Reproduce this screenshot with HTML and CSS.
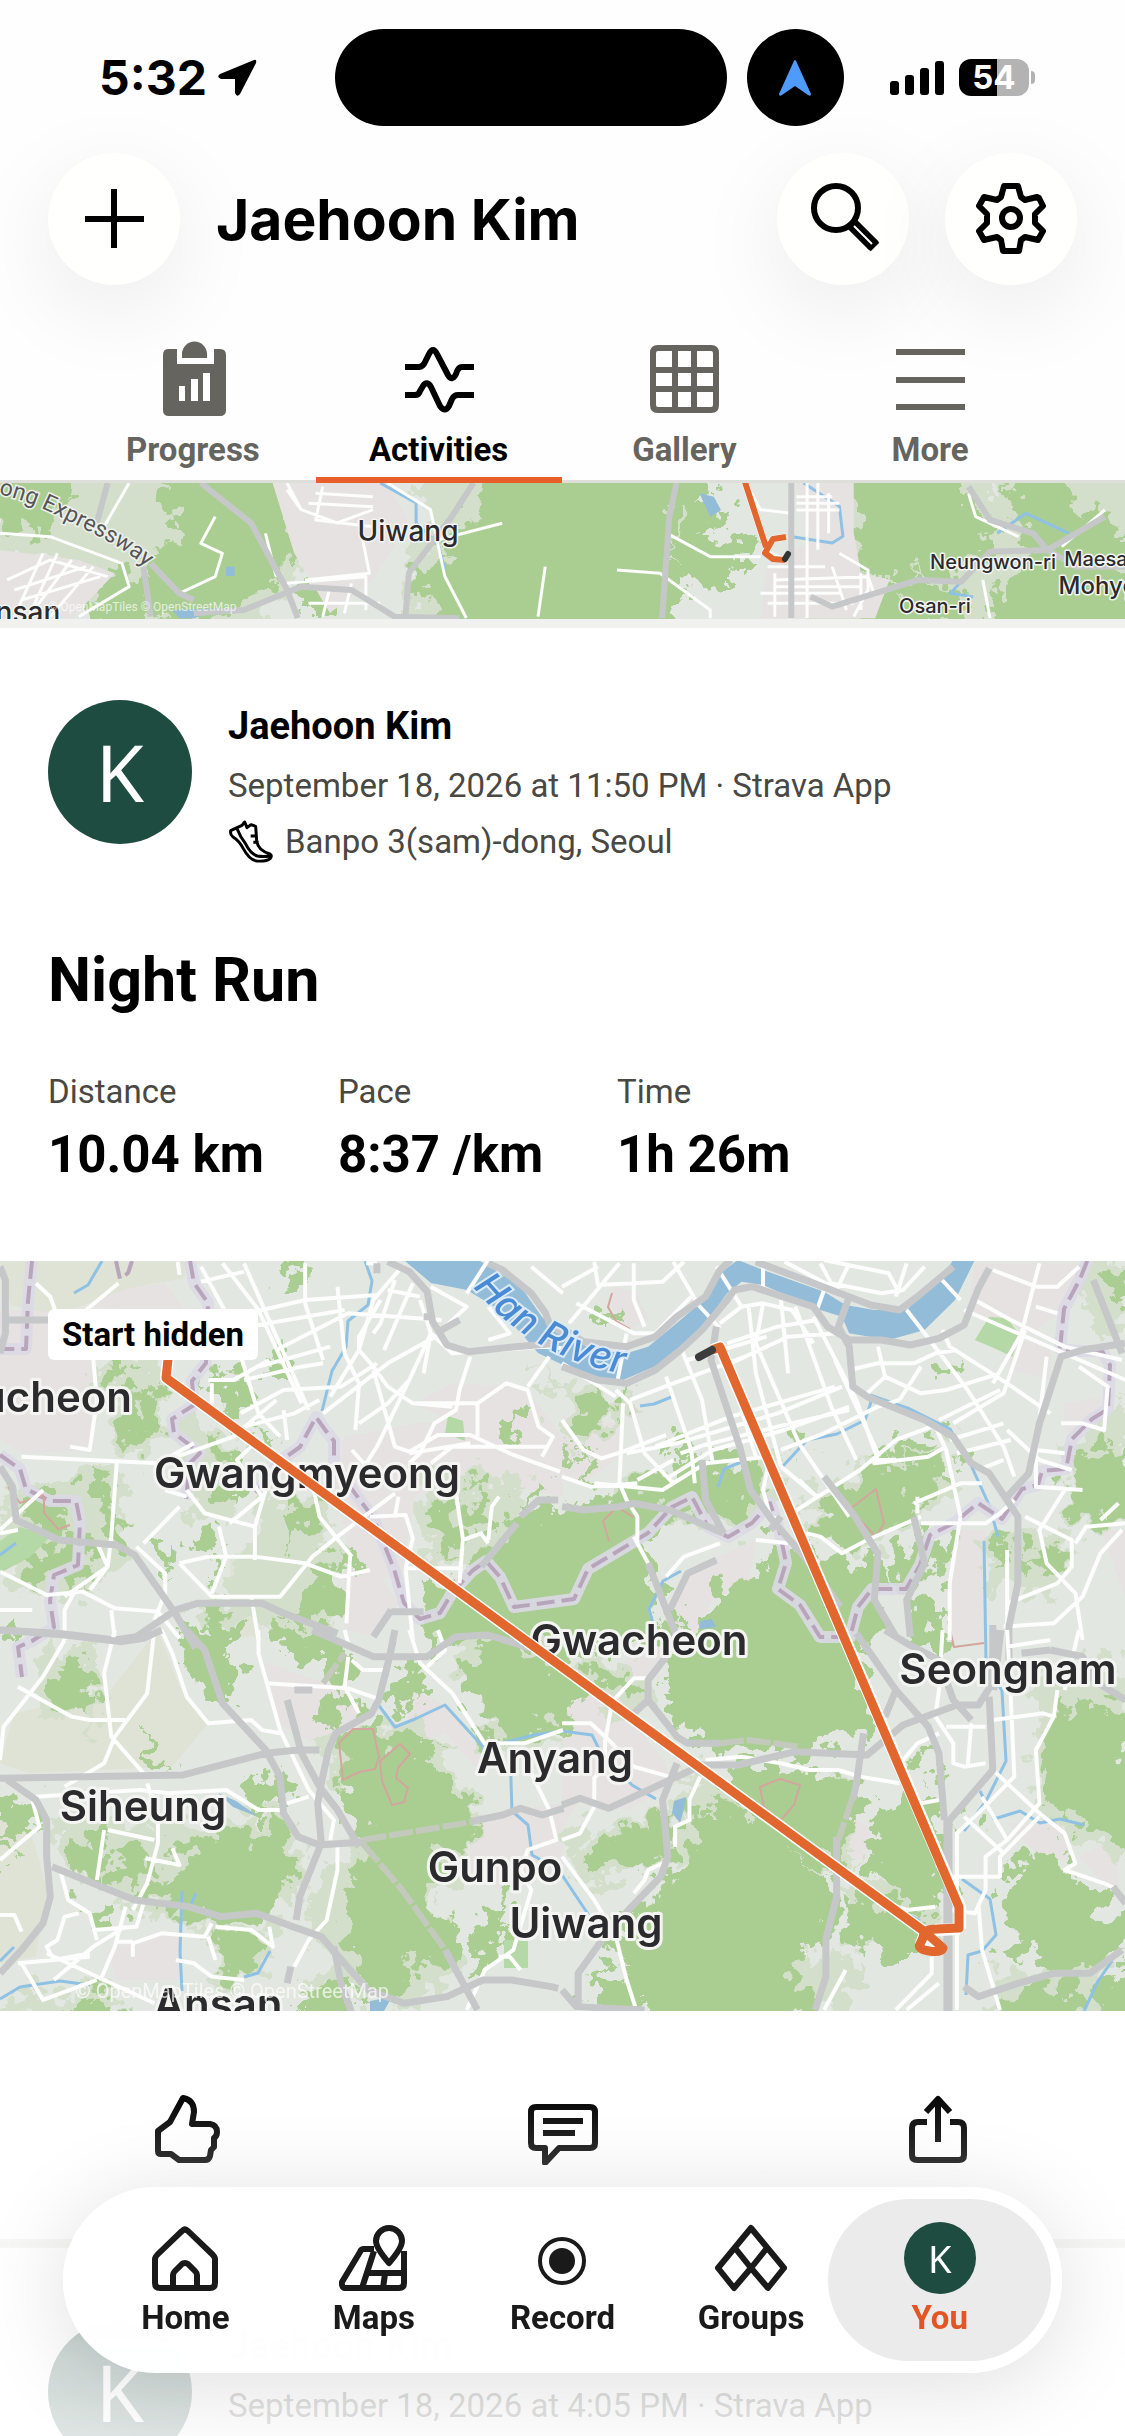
FILE: index.html
```html
<!DOCTYPE html>
<html lang="en">
<head>
  <meta charset="UTF-8">
  <meta name="viewport" content="width=device-width, initial-scale=1">
  <title>Activities</title>
  <link rel="stylesheet" href="styles.css">
</head>
<body>
  <div class="screen">
    <header class="header">
      <div class="status">
        <div class="status-time">
          <span>5:32</span>
          <svg width="40" height="40" viewBox="0 0 40 40"><path d="M37 2 3 16q-4 3 1 5h14v14q2 5 5 1L39 5q1-4-2-3z"/></svg>
        </div>
        <div class="status-island">
          <div class="island"></div>
          <div class="island-dot">
            <svg width="34" height="38" viewBox="0 0 34 38"><path d="M17 1q1 0 2 3l14 31q0 3-3 1L17 27 4 36q-3 2-3-1L15 4q1-3 2-3z" fill="#4f9bfb"/></svg>
          </div>
        </div>
        <div class="status-right">
          <svg width="54" height="34" viewBox="0 0 54 34"><rect y="20" width="9" height="14" rx="3"/><rect x="15" y="14" width="9" height="20" rx="3"/><rect x="30" y="7" width="9" height="27" rx="3"/><rect x="45" width="9" height="34" rx="3"/></svg>
          <div class="battery"><span>54</span></div>
        </div>
      </div>

      <div class="title-bar">
        <button class="round" aria-label="Add">
          <svg viewBox="0 0 132 132"><path class="line" d="M66 36v59M37 66h59"/></svg>
        </button>
        <h1>Jaehoon Kim</h1>
        <button class="round" aria-label="Search">
          <svg viewBox="0 0 132 132">
            <circle class="line" cx="59" cy="55" r="22"/>
            <path d="M74 70 97 93" stroke="#000" stroke-width="13"/>
            <path d="M95 91l3 3" stroke="#000" stroke-width="12" stroke-linejoin="round"/>
            <path d="M77 73 95 91" stroke="#fff" stroke-width="2"/>
          </svg>
        </button>
        <button class="round" aria-label="Settings">
          <svg viewBox="0 0 132 132">
            <circle class="line" cx="66" cy="65" r="9"/>
            <path class="line" d="M59 33h14l3 11 4 3 12-3 2 1 4 8-8 8v9l8 8-5 9-13-3-4 3-2 11H58l-2-11-4-3-13 3-5-9 8-8v-9l-8-8 5-9 13 3 4-3z"/>
          </svg>
        </button>
      </div>

      <nav class="tabs">
        <button class="tab">
          <svg viewBox="0 0 80 80"><path d="M15 9h9v15h37V9h6q6 0 6 6v55q0 6-6 6H16q-6 0-6-6V15q0-6 5-6z"/><path d="M29 18v-4a12 12 0 0 1 25 0v4z"/><path d="M26 46h6v15h-6zM38 39h7v22h-7zM50 33h7v28h-7z" fill="#fff"/></svg>
          Progress
        </button>
        <button class="tab active">
          <svg viewBox="0 0 80 80"><path class="line" d="M6 27h14q4 0 6-5l4-8q4-8 8 0l11 21q4 7 8-1 2-7 6-7h12M6 55h10q4 0 5-4l3-5q4-6 8 1l9 19q5 7 9 0l3-7q2-4 6-4h16"/></svg>
          Activities
        </button>
        <button class="tab">
          <svg viewBox="0 0 80 80"><path class="line" d="M14 8h53q5 0 5 5v52q0 5-5 5H14q-5 0-5-5V13q0-5 5-5zM31 8v62M50 8v62M9 30h63M9 49h63"/></svg>
          Gallery
        </button>
        <button class="tab">
          <svg viewBox="0 0 80 80"><path class="line" d="M6 12h69M6 40h69M6 67h69"/></svg>
          More
        </button>
      </nav>
    </header>

    <main class="feed">
      <section class="card">
        <svg class="map map-strip" viewBox="0 0 1125 136" preserveAspectRatio="xMidYMid slice">
          <defs>
            <filter id="rough" x="-5%" y="-5%" width="110%" height="110%">
              <feTurbulence type="fractalNoise" baseFrequency="0.045" numOctaves="4" seed="7" result="n"/>
              <feDisplacementMap in="SourceGraphic" in2="n" scale="62" xChannelSelector="R" yChannelSelector="G"/>
            </filter>
          </defs>
          <rect class="land" width="1125" height="136"/>
          <g filter="url(#rough)">
            <path class="wood-light" d="M0-20h330l-20 90-60 90H120L60 80 0 70zM430-20h250v180H400zM830-20h150l40 100-20 80h-200zM1000-20h180v180H940z"/>
            <path class="wood" d="M-20-30h110l-20 50-30 30-60-20zM150-30h130v60l20 40-30 30-60 40-80-10 20-60 30-20zM300 90h60l-20 40h-40zM318 30l30 5 0 40-30-5zM500-30h170v100l20 30-20 60H450l-40-60 50-50zM680 10l50 10-20 20 50 30-30 20v20l-60-20zM600-20h110v30l-50 20zM850-30h90l30 50 30 30-60 50-80-10-10-60zM1000-10h60l20 40 50 10v80l-80 30-40-40 20-50zM860 95l100 10 10 40H850zM990 110l140-20v60h-140zM100 80l60 30-20 40h-50zM560 100l100-10 10 60H540z"/>
          </g>
          <g transform="translate(0 -163) scale(.7174 .3333)">
            <path class="urban" d="M380 489h160l30 120-50 170-60 100-50-180zM1110 489h80v150l10 120 40 20-20 116h-160l10-170 60-60zM0 690l110 30 50 40-60 135H0z"/>
            <path class="stream" d="M530 489l50 60 0 60 30 60 10 80M1120 489l50 70 5 90-15 20-60-20M1390 640l40-60 60 60M1350 760l-25 60 30 10-20 30"/>
            <path class="water" d="M975 520l20 10 10 40-15 20zM315 740h12v28h-12zM240 870l70-5-40 30h-20z"/>
            <path class="road" d="M180 489l-40 150M400 489l20 80 50 40 50-40M420 570l-20-60M450 500l-10 100 80 20M440 520l80 10M430 550l90 10M540 489l60 80 20 200 30 125M370 640l15 130M300 590l-20 80 30 30-10 70-50 50M0 640l70 10 100 80 10 70-70 90M10 780l60-60 80 50M30 840l110-70M20 810l100-70M60 700l-40 190M80 700l-40 190M100 720l-60 170M130 740l-60 150M400 790l110-20 0 100M430 850l100 0M460 800l-10 90M490 790l-10 90M700 610l-90 50M760 740l-10 150M500 600l15 160-90 20M930 640l60 70 70 0M860 750l60 10 70 110 0 25M1125 489v405M1110 570h60M1110 530h50M1110 550h60M1140 489v200M1155 520v120M1070 740h80M1080 780l130-10 10 60M1080 800h120M1060 820h110M1070 850h120M1160 740l20 130M1200 760l0 110M1080 760v130M1350 520l10 70 60 60M1370 780l10 115M1480 680l60-110M1170 700l40 50 0 60-20 80M1040 489l20 80 40 10"/>
            <path class="highway" d="M150 489l-15 120M210 730l40 90 20 20M660 489l-30 100-60 170-5 135M943 489l-10 100-10 305M270 880l70-10 80-70 70 10 60 80 90 5M1130 830l30 30 60-40 60-40 60 5 40-90 80-5 80-100M1350 500l30 100 60 40 20 50M1460 690l40 50 68 0M280 489l70 120 50 200 15 85M200 740l10 150"/>
            <path class="highway wide" d="M1103 489v405"/>
          </g>
          <path id="expressway" d="M-78 12C-20 0 20 14 60 34S130 66 168 104" fill="none"/>
          <text class="road-name"><textPath href="#expressway">Yeongdong Expressway</textPath></text>
          <g class="place small">
            <text x="408" y="58" font-size="28">Uiwang</text>
            <text x="993" y="86" font-size="20">Neungwon-ri</text>
            <text x="1102" y="83" font-size="20">Maesan</text>
            <text x="1112" y="111" font-size="24">Mohyeon</text>
            <text x="935" y="130" font-size="20">Osan-ri</text>
            <text x="18" y="139" font-size="28">Ansan</text>
          </g>
          <path class="route-case" d="M744-4l22 68M786 54l-13 2-8 14 18 7"/>
          <path class="route thin" d="M744-4l22 68M786 54l-13 2-8 14 8 6 12 1"/>
          <path d="M785 76l3-5" stroke="#333" stroke-width="6" stroke-linecap="round"/>
          <text class="credit" x="48" y="128" font-size="12">© OpenMapTiles © OpenStreetMap</text>
        </svg>
      </section>

      <article class="card">
        <div class="card-head">
          <div class="avatar">K</div>
          <div>
            <div class="name">Jaehoon Kim</div>
            <div class="meta">September 18, 2026 at 11:50 PM · Strava App</div>
            <div class="place-line">
              <svg width="46" height="44" viewBox="24 30 138 132"><path d="M32 62 66 46l8-10 7 17 12-9 14 5 3 43q4 30 40 40 8 5 0 14-10 9-40 7-22-3-40-37-12-24-32-36-8-6-6-18zM52 58q8 22 24 42 16 32 36 38 18 3 38 0M92 78h17M100 97h16"/></svg>
              Banpo 3(sam)-dong, Seoul
            </div>
          </div>
        </div>
        <h2>Night Run</h2>
        <dl class="stats">
          <div><dt>Distance</dt><dd>10.04 km</dd></div>
          <div><dt>Pace</dt><dd>8:37 /km</dd></div>
          <div><dt>Time</dt><dd>1h 26m</dd></div>
        </dl>

        <div class="map-wrap">
          <svg class="map" viewBox="0 0 1125 750">
            <rect class="land" width="1125" height="750"/>

            <!-- built-up areas and fields -->
            <g transform="translate(0 -11) scale(.359 .3333)">
              <path class="urban" d="M0 180h130l130 150 0 270-200 10-60-40zM260 130l200-30 60 90-260-20zM960 560l200-40 280-20 128 60v180l-280-60-130 60-40 250-130-20-60-280zM960 960l90 0 60 100-60 100-90-20zM1150 460l110-60 200 10 108 150-250-10z"/>
              <path class="field" d="M0 35h530l-20 50-150 30-200 80-130-30zM640 920l90 0 0 240-90 0z"/>
            </g>
            <g transform="translate(562 -11) scale(.359 .3333)">
              <path class="urban" d="M0 500l160 20v100l-100 80-60-20zM1150 40l320 0-60 130-100 80-180-70zM350 960l190-90-20 120-100 60-60 120h-70zM1090 840h90v330h-110zM1500 840h68v200zM1400 460l100-20 0 80-100 30z"/>
              <path class="urban" d="M140 110l70 20 30 80-50 30-50-70zM1240 260l120 30 0 100-110-30z"/>
            </g>
            <g transform="translate(0 369) scale(.359 .3333)">
              <path class="field" d="M0 560l90 60 40 160-30 200L0 1000zM40 250l260-60 140-190 60 170 80 110-100 130-400 20-80-30z"/>
              <path class="urban" d="M720 90l240 90 50 100-100 80-140-80zM1150 180l100 50 90 140 0 60-100-120-120 50zM1310 560l258-40v200l-180 60-80-60zM300 960l200-60 0 150-180 0z"/>
            </g>
            <g transform="translate(562 369) scale(.359 .3333)">
              <path class="urban" d="M0 180l60-60 180 0-40 160 60 80 60 100-140 80-130-30L0 600zM150 120l80-80 60 30-90 180zM800 560l60 30-20 100-40-10zM1240 580l150 0 40 110-90 0zM1440 680l110-70v200z"/>
            </g>

            <!-- woodland, edges roughened by the filter -->
            <g filter="url(#rough)">
              <g transform="translate(0 -11) scale(.359 .3333)">
                <path class="wood-light" d="M240 320h200l20 180-60 130-70-30-10-150zM0 730l320-80 50 200-100 180-180 20-90-100zM480 500l180 60-10 260-120-40zM740 720l140 20 60 120-10 300-120-20-330-40 150-60 60-160zM1160 680l320 0-70 250-240 20zM1480 300l88 140v60z"/>
                <path class="wood" d="M775 45h80l-10 40-70 10zM300 345h40l-10 70-30-10zM365 415h80l-10 80-45 110-40-30zM580 370l110-15 20 70-50 60-50 20-30-90zM740 310h80l0 70-70 0zM740 520l20 70-30-10zM600 560l60 40 0 180-40-40zM265 670l40 10 0 80 60 60-10 60-50-20-40-80zM60 750l120-40 20 160-130-30zM60 910l150-40 70 40-10 100-80 0-50-50-70 60zM800 760l50-20 20 130-80 30zM850 830h50v50h-50zM420 870l50 0 20 90-50-30zM520 850l90-10-10 90-80-30zM920 890l60 0 10 80-70-20zM850 970l100-10 10 60-40 90-90-10zM1205 760l60-20 10 180-70-10zM1300 700l60 10-10 130-50-10zM1390 520l50-10v50l-50 10zM1450 730l70-30-20 50zM1390 830l200-70v440h-400l10-190 100-50zM560 960l50 0 0 60zM570 1090l60-30 30 140h-80zM760 1090l80 40 50 60h-110z"/>
              </g>
              <g transform="translate(562 -11) scale(.359 .3333)">
                <path class="wood-light" d="M0 420l120-30 80 80-140 130-60-60zM160 680l200-40 240-10-20 180-100 20-340-40zM640 780l240-180 220-30-10 180-200 140-180-20zM1180 850l240 0-40 200-200-60zM1440 60l128-30v200l-90 40zM1400 620l168-200v420l-150-20z"/>
                <path class="wood" d="M0 790l140-70 190-90 220-10 40 90-100 90-120 0-70-20-40 70-40 30 80 160-20 160H0zM20 480l80-60 80 20-40 60-70 60zM30 590l50 40-10 70-30-60zM300 530h50l-10 100-30-10zM635 545l60 0-20 50-45 10zM680 790l210-160 200-30 10 80-110 60 10 60-140 60-80 30-80-40zM580 860l120 20 110 320H330l110-190 110-40zM710 930l160-20 20 100-20 190h-60zM910 940l180-100 0 70-120 110-70-10zM1205 870l40-10-10 90-40 0zM1290 890l100 0 10 60-120 20zM1440 630l150-90v290l-140-20-40-90zM1050 350l60-20-20 50-50 10zM90 170l70 40-70 0zM1490 90l90-30v70l-70 0zM960 1070l110-20-10 150h-80zM880 600l160-50-10 40-100 30z"/>
              </g>
              <g transform="translate(0 369) scale(.359 .3333)">
                <path class="wood-light" d="M100 60l170 0 0 240-170-60zM880 340l300-90 80 150 80 100-20 200-100 100 60 240-140 100-240-80-40-240 140-220zM160 560l680 0 0 260-240 60-250-60-180-100zM560 880l200 0 20 120-160 80zM1240 40l330-20v320l-200 20zM0 1100l340-40v100H0z"/>
                <path class="wood" d="M20 20h30v40h-30zM145 100l90-20 30 100-50 110-70-80zM505 0l100 10 50 100 0 110-50-10-90-120zM765 0l150 0 80 90-80 110-40-90zM895 200l90 0-10 80-60 20zM1085 110l90 0 0 100-70 30zM1295 90l120-70 180 90v180l-100 20-110 20-110-160zM415 320l60 60-10 50-50-60zM0 510l100 10 20 70-120 30zM0 640l80 10-80 50zM705 420l70-10 20 120-50 30-60-60zM955 340l70-60 90 50 100 0-20 80 60 30 70 70-10 140-100 50-20 100 90 110-50 100-90-30-30 190-80-100-70-150-30-70 90-190-80-180zM195 630l100-20 0 150-90-20zM495 630l160-40 140 20 40 60-70 170-150 30-200-60 20-60 80-40zM325 650l100 0-30 120-100-10zM275 840l60-10-10 60-50 0zM595 910l110 0 40 60-80 80-60-40zM195 1100l140 0v80H145zM845 1060l130 10v100H835zM1325 880l100-90-20 200-90 30z"/>
              </g>
              <g transform="translate(562 369) scale(.359 .3333)">
                <path class="wood-light" d="M60 60l200 80-30 140-170-100zM340 420l480 20-20 280-200 60-260-140zM0 620l330-90 30 160-200 80-110-20zM1300 120l268-20v600l-250-140zM820 700l240 160-40 120-220-40zM1200 1040l300-60v200h-300zM580 960l260 30-60 160h-200z"/>
                <path class="wood" d="M295-20l360 30 160 60 60 240-210 60-230-20-110-50-30-80zM75 100l120 40 10 50-110-20zM415 420l200-10 200 40 10 80-40 120-10 70-210-100zM75 630l150-50 80-30-10 150-80 40-150-30zM355 550l160 20 260 180-20 160-120 80 80 190H255L115 910l180-160 60-60zM415 500l180 120-160-40zM875 550l80-60 70 40 40 160 0 150-100 0-110-160zM795 790l120 40 120 80-40 80-80 0-120-80zM1345 300l80-90 170 40v400l-160-80-90-40zM1235 710l130-60 60 110 170 130v80l-190 50-180-50 20-110zM1450 1180l50-110 90-80v200zM1235 1090l180-30 20 120h-200zM95 1010l120 50-10 120h-90zM965 390l60-50 20 110zM1100 560l40 0 0 50zM0 1090l40 0 0 60z"/>
              </g>
            </g>
            <g transform="translate(562 -11) scale(.359 .3333)">
              <path class="park" d="M1150 270l40-70 50 5 35 50-20 65-60-30z"/>
            </g>
            <path class="park" d="M448 155l15 5 2 20-20-8zM504 679h24v28h-24zM0 280l20-14 30 10-20 20-30 16z"/>

            <!-- water -->
            <g transform="translate(562 -11) scale(.359 .3333)">
              <path class="water" d="M0 255 90 300 180 310 240 290 330 210 395 150 440 70 490 30 560 60 730 125 790 165 870 180 960 180 1070 60 1090 30h60L1095 150 1010 240 910 270 800 250 780 200 720 180 560 105 500 95 460 130 400 220 300 330 170 390 110 390 50 375 0 345z"/>
            </g>
            <path class="water" d="M405 0h75l15 9 26 17 21 30 21 18v30l-25-12-17-20-26-26-28-17-36-7z"/>
            <path class="water" d="M218 532l18 8 20 14-3 0-20-8zM674 540l12-4-2 12-4 14-8-10zM370 740l22-4-8 14h-14zM700 360l12-2 4 8-16 2z"/>
            <path class="stream" d="M365 0l7 20-4 24-20 16-2 26-14 24-10 40M102 0l-14 24-14 8M0 294l16-12M640 145l14-2 20-8M718 226l6-18 20-8M783 205l24-26 30-6 28-14 6-18-6-10M870 134l40 14 40 20 20 34 20 44 8 30M984 280l2 120 16 30 4 70-20 40-22 30M655 370l-6-22 14-28 18-10M395 380l-8 34-10 28 18 24 20-8 30-14 40 44M482 490l12-6 40-10 28-4 30 4 10 20 30 30 24 14M510 490l2 60 16 14 4 30 26 14 20 30 12 18M182 630l-2 60 2 40M270 690l-12 22-14 4M0 738l20-12 40-6 30 4M0 700l14-14M196 632l-6 14M980 530l14 28 26-8 20 12 20-4 24 6M962 618l28 20 6 36-14 16-14 4-2 40M1112 700l-14 20-14 30M896 646l24 14"/>

            <!-- borders of cities -->
            <path class="border-glow" d="M32 0l-4 40-2 48-26 0M0 194l20 14 6 20 24 12 26 0 4 20-2 44-24 10-4 26 4 26-22 14-14 6 4 30M190 0l4 22 14 20-2 60-14 18 2 24-22 14 2 14 26 20-10 10-4 36M256 232l24-32 20-14 16-30 10 14 8 10 0 24 40 54 20 50 10 34 16 16 20-6 12-20 20-22 14-10 14 16 14 30 60-8 14-30 60-36 24-26 20-10 16 30 20 10 24-14 18-20 10 30 6 30-8 26 22 16 20 32 30 0 8-30 14-18 34 0 14-24 10-30 24-12 24-20 24 16 20-30 16-4 4-14 24-2 6-30 20-20 16-10 2-44-8-14-22 0-20-2 4-40 16-30 20-50 14-22"/>
            <path class="border" d="M32 0l-4 40-2 48-26 0M0 194l20 14 6 20 24 12 26 0 4 20-2 44-24 10-4 26 4 26-22 14-14 6 4 30M190 0l4 22 14 20-2 60-14 18 2 24-22 14 2 14 26 20-10 10-4 36M256 232l24-32 20-14 16-30 10 14 8 10 0 24 40 54 20 50 10 34 16 16 20-6 12-20 20-22 14-10 14 16 14 30 60-8 14-30 60-36 24-26 20-10 16 30 20 10 24-14 18-20 10 30 6 30-8 26 22 16 20 32 30 0 8-30 14-18 34 0 14-24 10-30 24-12 24-20 24 16 20-30 16-4 4-14 24-2 6-30 20-20 16-10 2-44-8-14-22 0-20-2 4-40 16-30 20-50 14-22M116 0l4 18 8-6 4-12"/>
            <path class="zone" d="M339 482l14-14h20l6 28-4 12-16 3-16 8zM380 500l20-17 10 10-12 14-2 10 12 10-4 14-12 3-10-24zM760 526l20-8 20 6-6 20-14 16-16-14zM609 280l-6-20 14-14 16 10M850 248l26-20 8 34-8 14zM630 68l-14-8-8-14 4-14M8 226l12 16 24-8 M44 236l0 16 14 16 12-4M948 360l6 26 30-4"/>

            <!-- streets -->
            <g transform="translate(0 -11) scale(.359 .3333)">
              <path class="road" d="M0 840l120-120M60 620l380 20 100-60M0 965l130 70 100-10 90 50 120 10 60 80M440 640l210-80 120-110M260 330l10 120-20 150-55-10M325 640l-15 220-10 90-120 90M100 100l40 40 20 60M240 180l90-80M500 75l-5-40M560 50l80 160 80 280 60 70M620 40l100 140 120 280M680 40l180 440M560 95l120-30M650 200l200-50 200-15M640 240l320-60M770 300l200-110 260 20M720 350l200-60M680 390l160-40 60-10M580 390l70 0 100-60M590 400l0 60M670 490l120-70 160-10 100-70M680 530l140-40 70-40M790 480l10 90M850 40l0 120 50 170M900 490l180-150 150-90M920 440l80-140 40-150 80-100M940 110l20 200 40 90-10 140M1060 150l-60 110 0 40 40 50 40 60 70 50 110 10M1100 90l-40 130-20 30M1150 100l-80 200M1170 150l30 100-60 140-90 200-30 50M1000 520l80-60 60-70M1200 250l60 60 250-20 58 5M1310 320l-30 100-10 60-60 40-40 90-30 30M1160 460l170 0 80-60 60 20 30 110 40 30-30 60M1470 410l60-90M1040 360l60 230 40 15 80-50 90 0 120 60 130 50M1140 610l170-30M1200 640l60-50 260 0M1260 660l30 210 50-20 20 30M1330 460l0 100M1390 740l-20 30-10 100M980 600l50 60M520 720l50 70 140 40 0 100M740 720l-30 110M640 820l90-80-70-110 40-40M870 700l20 100 90 120M610 830l20 90-40 110M400 880l100-110M500 940l80-20 130 0 140 20 100 40 80-20M500 940l90 100 190 0 90-120 70-60 160-130M700 1040l20 130M975 920l-10 200M1030 800l100-5 20 70-20 90 150 0M1110 740l-10 60M1290 860l-10 140M1130 960l20 210M380 890l80 80 0 60-30 80M300 950l-50 70M270 880l30 70M180 1170l0-90 30-60M310 1080l10 90M0 1080l90 0M0 850l50-10M1050 40l-30 0M1200 110l100 60-60 60M1360 170l60 80-60 20M1480 50l88 80M1300 130l60-100M1200 250l-20 120M1080 120l90 20M520 740l-60-20"/>
              <path class="highway" d="M0 50l15 40 0 160-15 60M20 210l115 0M0 650l35 60 10 100 120 60 160 15 50 30 110 170 60 110M0 1140l160 10 160 20 60-10 110-80 60-20 180 0 60 30 150 60M1080 35l60 30 50 60 15 90 40 70 60 20 130-15 120-10M1450 800l50-50 55 0M1440 820l-100 130M1050 40l0 30M1180 200h30M1230 240l50-30M1090 1085l90 0M1040 1160l50-80"/>
              <path class="highway" d="M1360 40l40 20 80 70 40 60 10 30 38 30"/>
            </g>
            <g transform="translate(562 -11) scale(.359 .3333)">
              <path class="road" d="M0 110l100-60M20 220l140-180M40 160l160 90 60 0 100-110M200 40l0 110 30 80M90 35l10 70 180-10 60-60M180 250l-25 140M310 35l70 130 60 70M430 50l70 120M560 50l0 60M730 120l-20 60M940 130l-30-60-180-40M720 40l30 60 140 30 60-10 60-70M620 35l140 80M800 40l-40 90M960 40l-30 100M960 180l50 70M1050 80l60 70M290 380l70 220 10 100M330 290l60 160 30 190M520 170l20 200 70 280M560 160l-20 120 120 300 140 220M610 150l20 220M650 170l100 300 70 160M700 200l120 250 60 180 50 0M760 330l120 280M440 220l60-50 60-10 80 20 60 100M460 280l140-50 110-20M470 340l160-80 140-10M190 450l120-50 200-80M350 330l220-70M260 590l210-90 290-90M180 610l140-30 280-90 180-80M300 680l120-80 200-60 180-70M380 590l220-60 200-50M330 610l80-30M610 600l120-50 150-80 60-20M580 620l-20 100 20 80 30 10M500 480l40 140M610 650l100 90M640 790l190-130 100-90 100-40M880 610l-10 30 150-20 50-30M0 510l60 90 50 25 60-20 120-50M0 680l80 30 130-10M90 700l190 20 120-80 180-20M170 460l-10 240 20 50 30 50 0 80M150 420l40 40 40 150 80 90M0 340l150 100M210 690l100-60M240 940l-40-80M800 360l80-20 100 0 60-30 60-10M880 290l20 90-50 50M900 380l100 50 70-10 150-50M940 450l60-100M1010 250l120 170 100 170 30 90M1060 240l20 50 160 110 120 90M1120 180l450 210M1150 150l100 60 150 80 160 40M1200 400l80-150 40-170 10-40M1290 240l-60 190-140 90M1050 510l170-90M1080 570l150-50M1100 610l150-40M1160 660l70-30M1240 540l90 90 90 30M1200 60l120 50 60 0 60-60M1320 170l60 20M1440 350l80 60-10 130-60-20-60 0M1350 320l-30 280 80 10M1320 600l0 110 130 10M1400 720l-70 120 20 100 80 90 20 140M1290 800l130 70 0 80-40 50-140 60M1230 1130l140-10 80-80 50-130 60-70M1430 880l30-50 110-10M1500 810l50-50M1260 750l-40 40-40 30-180 0M1000 800l-150 70-70 40-60-50-40-10M980 760l130-60 60 0M990 740l0 50M1040 530l30 70 40 200M1110 800l-30 200 0 170M660 690l50 50M290 980l50-60 100-40M540 870l90 10M1240 900l0 270"/>
              <path class="highway" d="M0 235l60 40 120 15 80-30 60-60 80-60 40-80 30-30M540 35l150 60 170 70 80 15 50-40 100-90M0 350l100 40 80 10 80-40 70-60 60-60 70-90 20-30 50-10 170 60 40 60 60 40 90 0 80 15 80-20 70-40 40-110 30-60M800 140l-30 90 30 60 10 120 40 30 160 70 80 50 50 80 50 30 80 130 0 80 0 120-25 130 0 100M1240 740l60-70 30-150 60-200 60-20 118-20M1480 90l80 220M430 230l-15 100 80 260 30 130 60 90 90 110 100 150M390 630l10 120 50 100M0 770l60 10 100-10 40-10 100 20 150 70M240 940l80 220M300 1080l50-110 80-40M730 680l80 110 70 120-10 140 60 110M980 800l30 140-50 110 10 110M610 800l-30 40"/>
            </g>
            <g transform="translate(0 369) scale(.359 .3333)">
              <path class="road" d="M180 30l-60 110-110 150-10 100M50 170l150 90 50 10 100 0M320 0l-30 130 20 190 90 110M430 0l-20 190-90 130-30 80-110 70M450 0l30 70 40 130 60 80 120-10 30 30 50 10M720 0l0 70 60 230 80 180M740 160l230 15 80 30M960 170l40 80M970 80l-10 90M980 90l30 30 60 0M960 0l10 40M1140 0l30 100 90 90 90 150 110 0 108-40M1220 0l20 60-50 50M100 500l140-10 150-10 80 10 160-10 90 60 60 0M410 460l30 100 0 80-30 120-40 80M300 600l130 30M290 600l-20 150M405 685l95 20-20-50M0 690l110-100-20-80M170 730l20 80 60 40 20 80M800 520l60-20M860 480l70 90-10 60M940 640l0 80-30 150-50 60-40 80M590 880l-20 40-120-10-80 30 0 40M580 920l20 70M600 890l100 10 60 50-10-60M350 830l-30 120-40 100M400 820l-20 70-120 10M220 850l-40 10-20 70-30 20 20 40 100-20M50 1000l200-20M130 970l300 150M60 1000l60 110 150-60M150 1050l110-100 90-60M320 935l50 0M490 990l50 10 50 40 90 10M0 855l40 0 20 50M1480 430l50 110 20 90-80 30-20 60 30 60-50 180-80 60-50 120M1390 980l30 0 30 40"/>
              <path class="highway" d="M0 0l180 15 160 20 60-10 50-25M520 0l50 60 50 160 120 140 40 80 10 110 40 70 60 25 130-10M0 445l510-10 230-65 90-10 60 0M20 450l80 60 30 60 0 110 10 120-20 80-60 80-60 70M145 710l230 100 150 20 90 30 100-10 100 40 80 30 40 50 90 110 100 40 120-20 100-50 80 0 110 20 20 5M800 210l40 160 50 100 50 70 60 110M1100 0l-15 80-30 130-20 40-100 60-20 50-20 100-10 60 10 120-60 160-10 70M870 0l170 80 150 0 80-60 90-5 120 40M1240 960l30 60 60 120M1310 575l90-20 50-20 60 20 60-20M820 180h50M930 950l20 110 30 90M810 1010l-10 50"/>
              <path class="tunnel" d="M1010 640l110 140 60 90 60 90M1010 630l310-55M900 160l60-90"/>
            </g>
            <g transform="translate(562 369) scale(.359 .3333)">
              <path class="road" d="M240 145l-40 0-60 70-20 120 0 70-30 40M0 280l80 0 50 50 70 80 100 30M90 440l0 90-40 80-50 20M0 680l90 130 60 110 30 130 30 100M385 440l-30 70 0 60-40 20 0 60M280 700l-40 20-10 30-30 40M400 390l100-10 110 20 80 20 80 0 60 20 110 20M950 390l40-50 60-30M1000 520l50-10M1240 0l10 200 10 240-110 120-50 50 0 530M1060 0l-10 180-10 80 50 80 0 60 30 10 60-10M1200 270l140-20 30 10M1380 180l-10 80-50 100 10 160-90 110-60 50 0 100-30 70-70-10M1200 420l130 130 70 60 30 90-30 20 110 40 40 20M1120 560l110 110M1170 500l70 130M1330 560l-110 120 0 60-130 0M1160 820l10 140 50 180M780 740l100 70 80 30 80-10M790 1020l-60 120M1050 1060l-90 80M1030 980l0 50-100 110M1140 280l-10 130M1070 290l110 0M1440 0l-40 180M1240 50l120-20"/>
              <path class="highway" d="M290 80l-50 70 0 60 80 110 30 20 90 0M240 210l-40 40M0 1080l40 50 190 10M320 400l-40 110 15 170-20 60-90 100-80 100-60 90 0 110M0 525l50-20 80 30 120-60 140-70 100 0 160-40 200 10 100-90 150-60 60 0 30-50 10-100 0-90M900 260l30-80-110-170M900 0l60 40 90 50 40 120 50 60M930 180l90 110 30 80 15 200M840 310l-20 150-10 50M765 620l0 180-30 130 0 110-30 100M1190 200l10 220-120 150M1120 1070l40 30 110-40 100-30 100 0 90-70M1360 60l-80 10M1480 150l90 60M1535 770l35 50M1360 60l90 20 30 70"/>
              <path class="highway wide" d="M1075 560v583M1220 0l-20 180"/>
              <path class="tunnel" d="M810 500l-40 130M440 340l80-10 140 20"/>
            </g>

            <path id="han" d="M473 26Q530 96 624 113" fill="none"/>
            <text class="river"><textPath href="#han">Han River</textPath></text>
            <g class="place">
              <text x="132" y="151" text-anchor="end">Bucheon</text>
              <text x="307" y="227">Gwangmyeong</text>
              <text x="639" y="394">Gwacheon</text>
              <text x="1008" y="423">Seongnam</text>
              <text x="555" y="512">Anyang</text>
              <text x="143" y="560">Siheung</text>
              <text x="495" y="621">Gunpo</text>
              <text x="586" y="677">Uiwang</text>
              <text x="218" y="758">Ansan</text>
            </g>
            <path class="route-case" d="M170 80l-4 37 759 554M960 668V646L720 86l-8 3M960 668l-22 1-13 3-4 11 20 6"/>
            <path class="route" d="M170 80l-4 37 759 554 18 16q-2 5-14 3t-9-7 4-10 13-5l22-1v-21L720 86l-8 3"/>
            <path d="M712 89l-13 7" stroke="#3c3c3c" stroke-width="8" stroke-linecap="round"/>
            <text class="credit" x="75" y="737" font-size="20">© OpenMapTiles © OpenStreetMap</text>
          </svg>
          <span class="badge">Start hidden</span>
        </div>

        <div class="actions">
          <button aria-label="Give kudos">
            <svg viewBox="0 0 72 72"><path class="line" d="M31 5q11 2 11 14l-2 12h18q7 1 7 8 0 4-3 6v9l-3 3-1 6q-1 4-5 4H27l-8-6H9q-3 0-3-3V38l12-9z"/></svg>
          </button>
          <button aria-label="Comment">
            <svg viewBox="0 0 72 72"><path class="line" d="M9 14h54q5 0 5 5v31q0 5-5 5H32L18 70V55H9q-5 0-5-5V19q0-5 5-5zM16 28h40M16 40h32"/></svg>
          </button>
          <button aria-label="Share">
            <svg viewBox="0 0 72 72"><path class="line" d="M25 29h-9q-6 0-6 6v27q0 5 5 5h42q5 0 5-5V35q0-6-6-6h-8M36 49V6M24 19 36 6l12 13"/></svg>
          </button>
        </div>
      </article>

      <article class="card">
        <div class="card-head">
          <div class="avatar">K</div>
          <div>
            <div class="name">Jaehoon Kim</div>
            <div class="meta">September 18, 2026 at 4:05 PM · Strava App</div>
          </div>
        </div>
      </article>
    </main>

    <div class="fade"></div>
    <nav class="bottom-nav">
      <a href="#">
        <svg viewBox="0 0 72 72"><path class="line" d="M33 9q3-3 6 0l24 23q3 3 3 5v24q0 5-5 5H11q-5 0-5-5V37q0-2 3-5zM24 66V53q0-2 2-4l7-7q3-2 6 0l7 7q2 2 2 4v13"/></svg>
        Home
      </a>
      <a href="#">
        <svg viewBox="0 0 72 72"><path class="line" d="M36 27H26q-3 0-4 3L4 60q-1 6 4 6h53q5 0 5-5V29M36 29 24 66M31 51h35M47 52l-2 14M51 41Q38 26 38 19a13 13 0 0 1 26 0q0 7-13 22z"/></svg>
        Maps
      </a>
      <a href="#">
        <svg viewBox="0 0 72 72"><circle cx="36" cy="39" r="22" fill="none" stroke="#1a1a1a" stroke-width="4"/><circle cx="36" cy="39" r="13"/></svg>
        Record
      </a>
      <a href="#">
        <svg viewBox="0 0 72 72"><path class="line" d="M36 6 69 46 53 66 36 46 19 66 3 46zM20 26l16 20 16-20"/></svg>
        Groups
      </a>
      <a href="#" class="current">
        <span class="avatar mini">K</span>
        You
      </a>
    </nav>
  </div>
</body>
</html>
```
FILE: styles.css
```css
* {
  box-sizing: border-box;
}

body {
  margin: 0;
  background-color: #fff;
  color: #000;
  font-family: Roboto, "Liberation Sans", sans-serif;
  font-size: 33px;
}

h1, h2, dl, dd {
  margin: 0;
}

button {
  border: none;
  background: none;
  padding: 0;
  font: inherit;
  color: inherit;
  cursor: pointer;
}

svg {
  display: block;
}

.line {
  fill: none;
  stroke: currentColor;
  stroke-width: 6;
  stroke-linejoin: round;
}

.screen {
  height: 100vh;
  display: flex;
  flex-direction: column;
  overflow: hidden;
}

/* status bar */
.header {
  background-color: #fefefe;
  border-bottom: 3px solid #dededb;
}

.status {
  display: flex;
  align-items: center;
  justify-content: space-between;
  padding: 29px 90px 27px 99px;
  font-family: Inter, sans-serif;
}

.status-time {
  display: flex;
  align-items: center;
  gap: 10px;
  font-size: 48px;
  font-weight: 700;
  line-height: 60px;
}

.status-island {
  display: flex;
  gap: 20px;
  margin-left: 32px;
}

.island {
  width: 392px;
  height: 97px;
  border-radius: 49px;
  background-color: #000;
}

.island-dot {
  width: 97px;
  height: 97px;
  border-radius: 50%;
  background-color: #000;
  display: grid;
  place-items: center;
}

.status-right {
  display: flex;
  align-items: center;
  gap: 15px;
}

.battery {
  position: relative;
  width: 70px;
  height: 37px;
  margin-right: 6px;
  border-radius: 12px;
  background: linear-gradient(to right, #000 54%, #b3b3b3 54%);
  color: #fff;
  font-size: 33px;
  font-weight: 700;
  line-height: 37px;
  text-align: center;
}

.battery::after {
  content: "";
  position: absolute;
  right: -6px;
  top: 12px;
  width: 4px;
  height: 13px;
  border-radius: 0 4px 4px 0;
  background-color: #b3b3b3;
}

/* title and tabs */
.title-bar {
  display: flex;
  align-items: center;
  gap: 36px;
  padding: 0 48px;
}

.title-bar h1 {
  flex: 1;
  font-family: Inter, sans-serif;
  font-size: 57px;
  font-weight: 700;
}

.round {
  width: 132px;
  height: 132px;
  border-radius: 50%;
  background-color: #fffffe;
  box-shadow: 0 24px 90px rgba(0, 0, 0, 0.08);
}

.tabs {
  position: relative;
  display: grid;
  grid-template-columns: repeat(4, 1fr);
  padding: 55px 72px 0 70px;
  margin-bottom: -3px;
}

.tab {
  display: flex;
  flex-direction: column;
  align-items: center;
  gap: 10px;
  padding-bottom: 7px;
  border-bottom: 6px solid transparent;
  color: #65645e;
  fill: #65645e;
  font-weight: 700;
  line-height: 40px;
}

.tab svg {
  width: 80px;
  height: 80px;
}

.tab.active {
  color: #000;
  border-bottom-color: #e85f2a;
}

/* feed */
.feed {
  flex: 1;
  min-height: 0;
  overflow: hidden;
}

.card {
  border-bottom: 9px solid #f1f1ef;
}

.card-head {
  display: flex;
  gap: 36px;
  padding: 72px 48px 0;
}

.avatar {
  flex: none;
  width: 144px;
  height: 144px;
  border-radius: 50%;
  background-color: #1f4c41;
  color: #fff;
  font-family: "Noto Sans", sans-serif;
  font-size: 78px;
  font-weight: 400;
  line-height: 144px;
  text-align: center;
}

.name {
  font-size: 38px;
  font-weight: 700;
  line-height: 52px;
}

.meta,
.place-line {
  color: #494843;
  line-height: 60px;
}

.meta {
  margin-top: 4px;
}

.place-line {
  display: flex;
  align-items: center;
  gap: 11px;
  line-height: 52px;
}

.place-line svg {
  fill: none;
  stroke: #000;
  stroke-width: 9;
  stroke-linejoin: round;
}

.card h2 {
  padding: 0 48px;
  margin-top: 76px;
  font-size: 61px;
  line-height: 72px;
}

.stats {
  display: flex;
  gap: 74px;
  padding: 56px 48px 76px;
}

.stats dt {
  color: #494843;
  line-height: 40px;
}

.stats dd {
  margin-top: 13px;
  font-size: 51px;
  font-weight: 700;
  line-height: 60px;
}

.actions {
  display: grid;
  grid-template-columns: repeat(3, 1fr);
  justify-items: center;
  padding: 82px 0 74px;
}

.actions svg {
  width: 72px;
  height: 72px;
}

/* maps */
.map-wrap {
  position: relative;
}

.map {
  width: 100%;
}

.map-strip {
  height: 136px;
}

.map path {
  vector-effect: non-scaling-stroke;
  stroke-linejoin: round;
}

.land { fill: #e3e7e1; }
.urban { fill: #e6e2e2; }
.field { fill: #dfe3d6; }
.wood { fill: #aace91; }
.wood-light { fill: #d3dfcb; }
.park { fill: #b4d8a6; }
.water { fill: #93bcd9; }

.stream, .road, .highway, .tunnel, .border, .border-glow, .zone, .route, .route-case {
  fill: none;
}

.stream {
  stroke: #8fc1e4;
  stroke-width: 3;
}

.road {
  stroke: #fcfdfc;
  stroke-width: 4;
}

.highway {
  stroke: #c6c7c9;
  stroke-width: 7;
}

.highway.wide {
  stroke-width: 9;
}

.map-strip .road {
  stroke-width: 3;
}

.map-strip .highway {
  stroke-width: 6;
}

.tunnel {
  stroke: #c3cabd;
  stroke-width: 6;
  stroke-dasharray: 24 3;
}

.border-glow {
  stroke: #dcd9e6;
  stroke-opacity: 0.9;
  stroke-width: 12;
}

.border {
  stroke: #b9a5bb;
  stroke-width: 4;
  stroke-dasharray: 18 7;
}

.zone {
  stroke: #d3a59e;
  stroke-width: 2;
}

.route {
  stroke: #e1672f;
  stroke-width: 9;
}

.route.thin {
  stroke-width: 6;
}

.route-case {
  stroke: #fff;
  stroke-width: 12;
}

.map-strip .route-case {
  stroke-width: 7;
}

.place {
  font-family: Inter, sans-serif;
  font-size: 42px;
  font-weight: 600;
  text-anchor: middle;
  fill: #2b2b2d;
  stroke: #f4f5f3;
  stroke-width: 6;
  stroke-linejoin: round;
  paint-order: stroke;
}

.place.small {
  font-weight: 500;
  stroke-width: 3;
}

.road-name {
  font-size: 23px;
  fill: #555;
  stroke: #eef1ec;
  stroke-width: 3;
  paint-order: stroke;
}

.river {
  font-family: Inter, sans-serif;
  font-size: 38px;
  font-style: italic;
  font-weight: 500;
  fill: #4a8bd6;
  stroke: #dceaf5;
  stroke-width: 4;
  paint-order: stroke;
}

.credit {
  fill: #fff;
  fill-opacity: 0.7;
}

.badge {
  position: absolute;
  left: 48px;
  top: 48px;
  padding: 0 14px;
  border-radius: 6px;
  background-color: #fff;
  font-weight: 700;
  line-height: 51px;
}

/* bottom bar */
.fade {
  position: fixed;
  left: 0;
  right: 0;
  bottom: 0;
  height: 350px;
  background: linear-gradient(to bottom, rgba(255, 255, 255, 0), rgba(255, 255, 255, 0.18) 20%, rgba(255, 255, 255, 0.78) 74%, rgba(255, 255, 255, 0.86));
  pointer-events: none;
}

.bottom-nav {
  position: fixed;
  left: 63px;
  right: 63px;
  bottom: 63px;
  display: grid;
  grid-template-columns: repeat(5, 1fr);
  padding: 12px 28px;
  border-radius: 93px;
  background-color: rgba(255, 255, 255, 0.98);
  box-shadow: 0 12px 90px rgba(0, 0, 0, 0.13);
}

.bottom-nav a {
  position: relative;
  display: flex;
  flex-direction: column;
  align-items: center;
  gap: 4px;
  padding: 23px 0;
  color: #1a1a1a;
  fill: #1a1a1a;
  font-weight: 700;
  line-height: 40px;
  text-decoration: none;
}

.bottom-nav svg {
  width: 72px;
  height: 72px;
}

.bottom-nav .current {
  color: #e35525;
}

.bottom-nav .current::before {
  content: "";
  position: absolute;
  inset: 0 -17px;
  z-index: -1;
  border-radius: 81px;
  background-color: #ebebeb;
}

.avatar.mini {
  width: 72px;
  height: 72px;
  font-size: 38px;
  line-height: 72px;
}
```
